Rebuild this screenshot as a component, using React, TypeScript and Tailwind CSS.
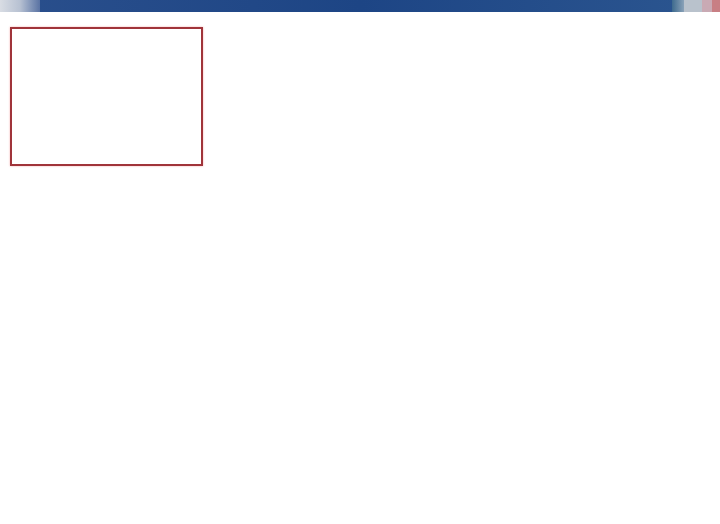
export default function App() {
  return (
    <div className="h-[524px] w-full bg-white overflow-hidden">
      {/* title bar */}
      <div className="flex h-[12px] bg-gradient-to-r from-[#2a4f8c] via-[#1d4585] to-[#2c5690]">
        <div className="w-[40px] h-full bg-gradient-to-r from-[#d9dde4] via-[#b7c1d2] to-[#5a73a3]" />
        <div className="flex-1" />
        <div className="flex h-full">
          <div className="w-[12px] h-full bg-gradient-to-r from-[#3d6a8e] to-[#8aa2b8]" />
          <div className="w-[18px] h-full bg-[#b9c2cc]" />
          <div className="w-[10px] h-full bg-[#c9aab4]" />
          <div className="w-[8px] h-full bg-[#c87f84]" />
        </div>
      </div>

      <div className="pt-[15px] pl-[10px]">
        <div className="w-[193px] h-[139px] border-2 border-[#a0343a] shadow-[0_0_2px_#f5b0b0]" />
      </div>
    </div>
  );
}
